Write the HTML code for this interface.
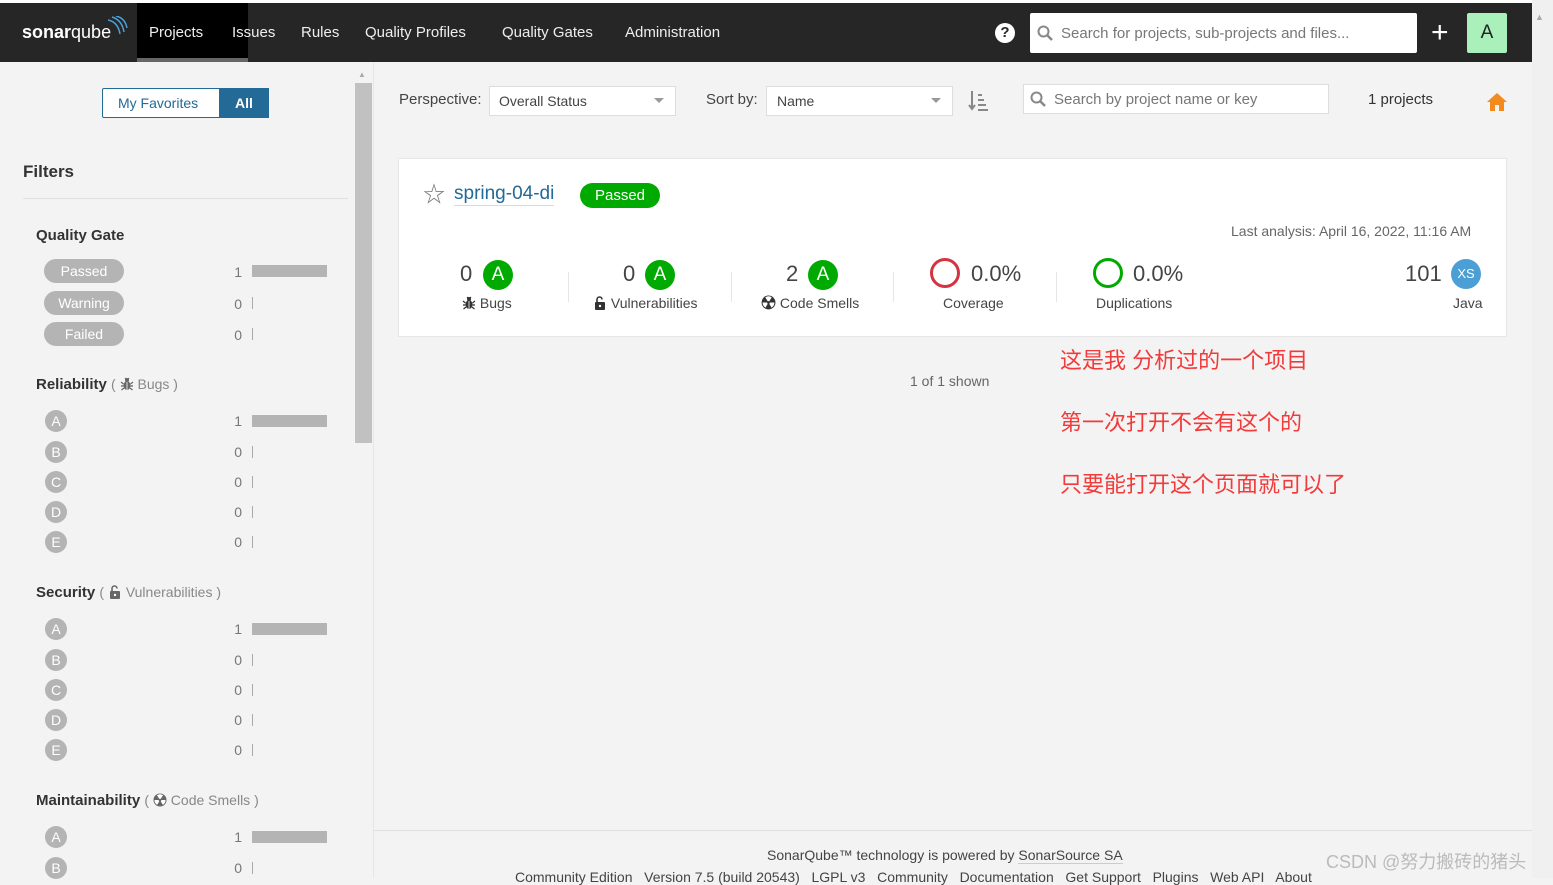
<!DOCTYPE html>
<html><head><meta charset="utf-8"><style>
*{box-sizing:border-box;margin:0;padding:0}
body{width:1553px;height:878px;overflow:hidden;background:#f3f3f3;font-family:"Liberation Sans","Noto Sans CJK SC",sans-serif;color:#444;font-size:14px;position:relative}
.abs{position:absolute}
.top{left:0;top:3px;width:1532px;height:59px;background:#262626}
.nav{top:3px;height:59px;line-height:59px;color:#eee;font-size:15px}
.rail{left:1532px;top:0;width:21px;height:878px;background:#f0f0f0}
.grade{width:22px;height:22px;border-radius:50%;background:#b4b4b4;color:#fff;text-align:center;line-height:22px;font-size:14px}
.cnt{width:20px;text-align:right;color:#777;font-size:14px}
.bar{height:12px;background:#b4b4b4}
.tick{width:1px;height:12px;background:#aaa}
.pill{width:80px;height:24px;border-radius:12px;background:#b4b4b4;color:#fff;text-align:center;line-height:24px;font-size:14px}
.ftitle{font-size:15px;color:#333;font-weight:bold}
.ftitle span{font-weight:normal}
.ga{width:30px;height:30px;border-radius:50%;background:#00aa00;color:#fff;text-align:center;line-height:30px;font-size:19px}
.big{font-size:22px;color:#444}
.lbl{font-size:14px;color:#444}
.red{color:#f23a3a;font-size:22px}
svg.i{vertical-align:-2px}
</style></head><body>
<svg width="0" height="0" style="position:absolute">
<defs>
<symbol id="bug" viewBox="0 0 14 14"><ellipse cx="7" cy="8.5" rx="3.5" ry="4.5" fill="currentColor"/><circle cx="7" cy="3" r="2" fill="currentColor"/><path d="M1 5 L3.5 7 M13 5 L10.5 7 M1 9 H3.5 M13 9 H10.5 M1.5 13 L4 11 M12.5 13 L10 11 M5 1 L6 2 M9 1 L8 2" stroke="currentColor" stroke-width="1.2"/><path d="M7 5 V13" stroke="#fff" stroke-width="0.8"/></symbol>
<symbol id="lock" viewBox="0 0 14 14"><path d="M4 6 V3.5 A2.5 2.5 0 0 1 9 3.5" stroke="currentColor" stroke-width="1.6" fill="none"/><rect x="2" y="6" width="10" height="8" rx="1" fill="currentColor"/><circle cx="7" cy="10" r="1.2" fill="#fff"/></symbol>
<symbol id="rad" viewBox="0 0 14 14"><circle cx="7" cy="7" r="6.5" fill="currentColor"/><path d="M7 7 L7 1.5 A5.5 5.5 0 0 1 11.8 4.3 Z M7 7 L11.8 9.7 A5.5 5.5 0 0 1 2.2 9.7 Z M7 7 L2.2 4.3 A5.5 5.5 0 0 1 7 1.5Z" fill="#fff" opacity="0"/><path d="M7 7 L4 2.2 A5.5 5.5 0 0 1 10 2.2 Z M7 7 L12.5 7 A5.5 5.5 0 0 1 9.8 11.8 Z M7 7 L4.2 11.8 A5.5 5.5 0 0 1 1.5 7 Z" fill="#fff"/><circle cx="7" cy="7" r="1.3" fill="currentColor"/></symbol>
</defs></svg>
<div class="abs" style="left:0;top:0;width:1553px;height:3px;background:#fff"></div>
<div class="abs top"></div>
<div class="abs rail"></div>
<div class="abs" style="left:1535px;top:12px;color:#aaa;font-size:9px">▲</div>
<div class="abs nav" style="left:22px;font-size:18px;font-weight:bold;color:#fff">sonar<span style="font-weight:normal">qube</span></div>
<svg class="abs" style="left:104px;top:16px" width="24" height="22"><path d="M4 4 Q14 6 16 18 M8 1 Q18 4 20 16 M12 0 Q21 2 23 12" stroke="#4b9fd5" stroke-width="1.5" fill="none"/></svg>
<div class="abs" style="left:137px;top:3px;width:111px;height:59px;background:#000"></div>
<div class="abs" style="left:137px;top:58px;width:111px;height:4px;background:#666"></div>
<div class="abs nav" style="left:149px">Projects</div>
<div class="abs nav" style="left:232px">Issues</div>
<div class="abs nav" style="left:301px">Rules</div>
<div class="abs nav" style="left:365px">Quality Profiles</div>
<div class="abs nav" style="left:502px">Quality Gates</div>
<div class="abs nav" style="left:625px">Administration</div>
<div class="abs" style="left:995px;top:23px;width:20px;height:20px;border-radius:50%;background:#fff;color:#262626;font-weight:bold;text-align:center;line-height:20px;font-size:15px">?</div>
<div class="abs" style="left:1030px;top:13px;width:387px;height:40px;background:#fff;border-radius:2px"></div>
<svg class="abs" style="left:1037px;top:25px" width="16" height="16"><circle cx="6.5" cy="6.5" r="5" stroke="#888" stroke-width="2" fill="none"/><path d="M10 10 L15 15" stroke="#888" stroke-width="2.5"/></svg>
<div class="abs" style="left:1061px;top:25px;color:#777;font-size:15px">Search for projects, sub-projects and files...</div>
<div class="abs" style="left:1431px;top:16px;color:#fff;font-size:30px;line-height:34px">+</div>
<div class="abs" style="left:1467px;top:13px;width:40px;height:40px;background:#aaf0bb;border-radius:2px;text-align:center;line-height:40px;font-size:19px;color:#222">A</div>

<!-- sidebar -->
<div class="abs" style="left:355px;top:66px;width:17px;height:812px;background:#f3f3f3"></div>
<div class="abs" style="left:358px;top:70px;color:#aaa;font-size:8px">▲</div>
<div class="abs" style="left:355px;top:83px;width:17px;height:360px;background:#c1c1c1"></div>
<div class="abs" style="left:373px;top:62px;width:1px;height:816px;background:#e6e6e6"></div>
<div class="abs" style="left:102px;top:88px;width:167px;height:30px;border:1px solid #236a97;border-radius:2px;background:#fff"></div>
<div class="abs" style="left:219px;top:88px;width:50px;height:30px;background:#236a97"></div>
<div class="abs" style="left:118px;top:95px;color:#236a97;font-size:14px">My Favorites</div>
<div class="abs" style="left:235px;top:95px;color:#fff;font-size:14px;font-weight:bold">All</div>
<div class="abs" style="left:23px;top:162px;font-size:17px;color:#333;font-weight:bold">Filters</div>
<div class="abs" style="left:23px;top:198px;width:325px;height:1px;background:#e0e0e0"></div>
<div class="abs ftitle" style="left:36px;top:227px">Quality Gate</div>
<div class="abs pill" style="left:44px;top:259px">Passed</div><div class="abs cnt" style="left:222px;top:264px">1</div><div class="abs bar" style="left:252px;top:265px;width:75px"></div>
<div class="abs pill" style="left:44px;top:291px">Warning</div><div class="abs cnt" style="left:222px;top:296px">0</div><div class="abs tick" style="left:252px;top:297px"></div>
<div class="abs pill" style="left:44px;top:322px">Failed</div><div class="abs cnt" style="left:222px;top:327px">0</div><div class="abs tick" style="left:252px;top:328px"></div>

<div class="abs ftitle" style="left:36px;top:376px">Reliability <span style="color:#888;font-size:14px">( <svg class="i" width="14" height="14" style="color:#666"><use href="#bug"/></svg> Bugs )</span></div>
<div class="abs ftitle" style="left:36px;top:584px">Security <span style="color:#888;font-size:14px">( <svg class="i" width="14" height="14" style="color:#666"><use href="#lock"/></svg> Vulnerabilities )</span></div>
<div class="abs ftitle" style="left:36px;top:792px">Maintainability <span style="color:#888;font-size:14px">( <svg class="i" width="14" height="14" style="color:#666"><use href="#rad"/></svg> Code Smells )</span></div>

<div id="g"></div>
<script>
var h='';
[[410,5],[618,5],[826,2]].forEach(function(s){
 var L=['A','B','C','D','E'];
 for(var i=0;i<s[1];i++){var y=s[0]+i*30+(i>0?1:0);
  h+='<div class="abs grade" style="left:45px;top:'+y+'px">'+L[i]+'</div>';
  h+='<div class="abs cnt" style="left:222px;top:'+(y+3)+'px">'+(i?0:1)+'</div>';
  h+=i?'<div class="abs tick" style="left:252px;top:'+(y+5)+'px"></div>':'<div class="abs bar" style="left:252px;top:'+(y+5)+'px;width:75px"></div>';}
});
document.getElementById('g').innerHTML=h;
</script>

<!-- main -->
<div class="abs" style="left:399px;top:91px;font-size:15px">Perspective:</div>
<div class="abs" style="left:489px;top:86px;width:187px;height:30px;background:#fff;border:1px solid #ddd"></div>
<div class="abs" style="left:499px;top:93px;font-size:14px">Overall Status</div>
<div class="abs" style="left:654px;top:98px;border:5px solid transparent;border-top:5px solid #999"></div>
<div class="abs" style="left:706px;top:91px;font-size:15px">Sort by:</div>
<div class="abs" style="left:766px;top:86px;width:187px;height:30px;background:#fff;border:1px solid #ddd"></div>
<div class="abs" style="left:777px;top:93px;font-size:14px">Name</div>
<div class="abs" style="left:931px;top:98px;border:5px solid transparent;border-top:5px solid #999"></div>
<svg class="abs" style="left:968px;top:89px" width="22" height="24"><path d="M4 2 V20 M1 16 L4 20 L7 16 M10 6 H14 M10 11 H16 M10 16 H18 M10 21 H20" stroke="#888" stroke-width="2" fill="none"/></svg>
<div class="abs" style="left:1023px;top:84px;width:306px;height:30px;background:#fff;border:1px solid #ddd"></div>
<svg class="abs" style="left:1030px;top:91px" width="16" height="16"><circle cx="6.5" cy="6.5" r="5" stroke="#888" stroke-width="2" fill="none"/><path d="M10 10 L15 15" stroke="#888" stroke-width="2.5"/></svg>
<div class="abs" style="left:1054px;top:91px;color:#777;font-size:15px">Search by project name or key</div>
<div class="abs" style="left:1368px;top:91px;font-size:15px;color:#333">1 projects</div>
<svg class="abs" style="left:1486px;top:91px" width="22" height="22"><path d="M11 2 L21 11 H18 V20 H13 V14 H9 V20 H4 V11 H1 Z" fill="#f28a1e"/></svg>

<div class="abs" style="left:398px;top:158px;width:1109px;height:179px;background:#fff;border:1px solid #e6e6e6"></div>
<div class="abs" style="left:423px;top:184px;font-size:22px;color:#777;line-height:22px">☆</div>
<div class="abs" style="left:454px;top:183px;font-size:19px;color:#236a97;border-bottom:1px solid #cde">spring-04-di</div>
<div class="abs" style="left:580px;top:183px;width:80px;height:25px;border-radius:13px;background:#00aa00;color:#fff;text-align:center;line-height:25px;font-size:15px">Passed</div>
<div class="abs" style="left:1231px;top:223px;font-size:14px;color:#666">Last analysis: April 16, 2022, 11:16 AM</div>

<div class="abs big" style="left:460px;top:261px">0</div><div class="abs ga" style="left:483px;top:260px">A</div>
<div class="abs lbl" style="left:462px;top:295px"><svg class="i" width="14" height="14" style="color:#333"><use href="#bug"/></svg> Bugs</div>
<div class="abs" style="left:568px;top:272px;width:1px;height:30px;background:#e6e6e6"></div>
<div class="abs big" style="left:623px;top:261px">0</div><div class="abs ga" style="left:645px;top:260px">A</div>
<div class="abs lbl" style="left:593px;top:295px"><svg class="i" width="14" height="14" style="color:#333"><use href="#lock"/></svg> Vulnerabilities</div>
<div class="abs" style="left:731px;top:272px;width:1px;height:30px;background:#e6e6e6"></div>
<div class="abs big" style="left:786px;top:261px">2</div><div class="abs ga" style="left:808px;top:260px">A</div>
<div class="abs lbl" style="left:761px;top:295px"><svg class="i" width="15" height="15" style="color:#333"><use href="#rad"/></svg> Code Smells</div>
<div class="abs" style="left:893px;top:272px;width:1px;height:30px;background:#e6e6e6"></div>
<div class="abs" style="left:930px;top:258px;width:30px;height:30px;border-radius:50%;border:3px solid #d4333f"></div>
<div class="abs big" style="left:971px;top:261px">0.0%</div>
<div class="abs lbl" style="left:943px;top:295px">Coverage</div>
<div class="abs" style="left:1056px;top:272px;width:1px;height:30px;background:#e6e6e6"></div>
<div class="abs" style="left:1093px;top:258px;width:30px;height:30px;border-radius:50%;border:3px solid #00aa00"></div>
<div class="abs big" style="left:1133px;top:261px">0.0%</div>
<div class="abs lbl" style="left:1096px;top:295px">Duplications</div>
<div class="abs big" style="left:1405px;top:261px">101</div>
<div class="abs" style="left:1451px;top:259px;width:30px;height:30px;border-radius:50%;background:#4b9fd5;color:#fff;text-align:center;line-height:30px;font-size:13px">XS</div>
<div class="abs lbl" style="left:1453px;top:295px">Java</div>

<div class="abs" style="left:910px;top:373px;font-size:14px;color:#666">1 of 1 shown</div>
<div class="abs red" style="left:1060px;top:343px">这是我 分析过的一个项目</div>
<div class="abs red" style="left:1060px;top:405px">第一次打开不会有这个的</div>
<div class="abs red" style="left:1060px;top:467px">只要能打开这个页面就可以了</div>

<div class="abs" style="left:374px;top:830px;width:1158px;height:1px;background:#e0e0e0"></div>
<div class="abs" style="left:767px;top:847px;font-size:14px;color:#444">SonarQube™ technology is powered by <span style="border-bottom:1px solid #ccc">SonarSource SA</span></div>
<div class="abs" style="left:515px;top:869px;font-size:14px;color:#444;white-space:nowrap">Community Edition &nbsp; Version 7.5 (build 20543) &nbsp; LGPL v3 &nbsp; Community &nbsp; Documentation &nbsp; Get Support &nbsp; Plugins &nbsp; Web API &nbsp; About</div>
<div class="abs" style="left:1326px;top:848px;font-size:18px;color:#bbb">CSDN @努力搬砖的猪头</div>
</body></html>
